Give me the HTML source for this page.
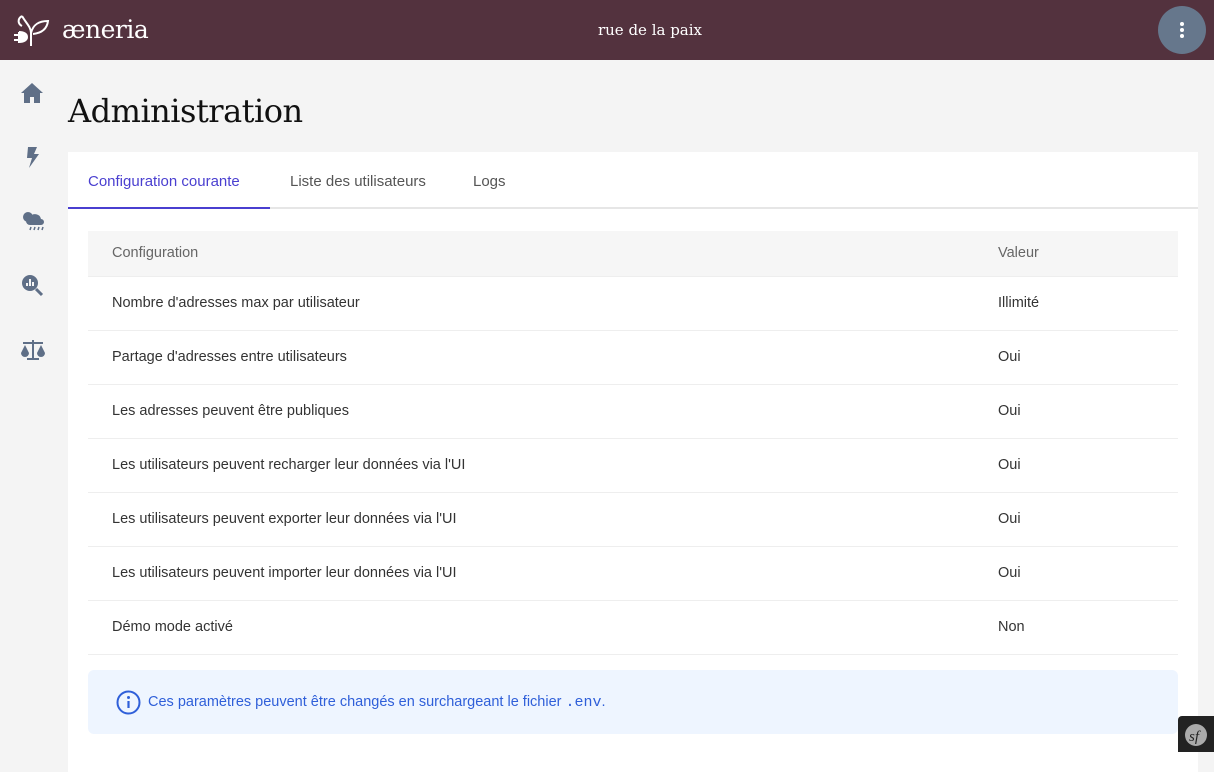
<!DOCTYPE html>
<html><head><meta charset="utf-8"><style>
*{box-sizing:border-box;margin:0;padding:0}
body{width:1214px;height:752px;overflow:hidden;background:#f4f4f4;font-family:"Liberation Sans",sans-serif;color:#333;position:relative}
.hdr{position:absolute;left:0;top:0;width:1214px;height:60px;background:#53323e;color:#fff}
.logo{position:absolute;left:62px;top:15px;font-family:"DejaVu Serif",serif;font-size:25px;letter-spacing:-0.5px}
.addr{position:absolute;left:0;width:1300px;top:21px;text-align:center;font-family:"DejaVu Serif",serif;font-size:15px}
.menu{position:absolute;left:1158px;top:6px;width:48px;height:48px;border-radius:50%;background:#66778c}
.menu i{position:absolute;left:22px;width:4px;height:4px;border-radius:50%;background:#fff}
.side svg{position:absolute;left:20px}
h1{position:absolute;left:68px;top:92px;font-family:"DejaVu Serif",serif;font-weight:normal;font-size:32px;color:#111;letter-spacing:-0.5px}
.card{position:absolute;left:68px;top:152px;width:1130px;height:620px;background:#fff}
.tabs{height:57px;border-bottom:2px solid #e6e6e6;position:relative;font-size:15px}
.tab{position:absolute;top:21px;color:#555}
.tab.a{color:#4a3fd0}
.ul{position:absolute;left:0;top:55px;width:202px;height:2px;background:#4a3fd0}
table{position:absolute;left:20px;top:79px;width:1090px;border-collapse:collapse;font-size:14.5px}
td{height:54px;padding-left:24px;border-bottom:1px solid #eee;color:#333}
tr.h td{height:45px;background:#f6f6f6;color:#666}
td.v{width:180px;padding-left:0}
.al{position:absolute;left:20px;top:518px;width:1090px;height:64px;background:#eef5ff;border-radius:6px;color:#2f5fd9;font-size:14.5px}
.al span{position:absolute;left:60px;top:24px}
.sf{position:absolute;left:1178px;top:716px;width:36px;height:36px;background:#222;border-radius:4px 0 0 0}
</style></head><body>
<div class="hdr">
<svg style="position:absolute;left:12px;top:13px" width="38" height="34" viewBox="0 0 38 34" fill="none" stroke="#fff" stroke-width="2"><path d="M19 33V20C19 14 14 10 10 3M19 20C21 12 26 8 36 8C35 16 30 20 21 21"/><path d="M10 3C5 6 6 11 10 13" /><path d="M2 22h5M2 27h5M7 19v10c5 0 8-2 8-5s-3-5-8-5" fill="#fff"/></svg>
<div class="logo">æneria</div>
<div class="addr">rue de la paix</div>
<div class="menu"><i style="top:16px"></i><i style="top:22px"></i><i style="top:28px"></i></div>
</div>
<div class="side">
<svg style="top:82px" width="24" height="22" viewBox="0 0 24 22" fill="#5f6f87"><path d="M12 1L1 11h3v10h6v-6h4v6h6V11h3z"/></svg>
<svg style="top:145px" width="24" height="24" viewBox="0 0 24 24" fill="#5f6f87"><path d="M8 2h9l-3 7h5L9 23l3-10H7z"/></svg>
<svg style="top:208px" width="26" height="24" viewBox="0 0 26 24" fill="#5f6f87"><circle cx="8" cy="9" r="5"/><path d="M10 17a4 4 0 010-8 6 6 0 0111 2 3 3 0 010 6z"/><path d="M11 19l-1 3M15 19l-1 3M19 19l-1 3M23 19l-1 3" stroke="#5f6f87" stroke-width="1.5"/></svg>
<svg style="top:273px" width="24" height="24" viewBox="0 0 24 24"><circle cx="10" cy="10" r="8" fill="#5f6f87"/><path d="M16 16l6 6" stroke="#5f6f87" stroke-width="3"/><path d="M7 13v-3M10 13V6M13 13V9" stroke="#f4f4f4" stroke-width="2"/></svg>
<svg style="top:338px" width="26" height="24" viewBox="0 0 26 24" fill="#5f6f87"><path d="M12 2h2v18h5v2H7v-2h5z M3 4h20v2H3z"/><path d="M1 15l4-8 4 8a4 4 0 01-8 0zM17 15l4-8 4 8a4 4 0 01-8 0z"/></svg>
</div>
<h1>Administration</h1>
<div class="card">
<div class="tabs"><span class="tab a" style="left:20px">Configuration courante</span><span class="tab" style="left:222px">Liste des utilisateurs</span><span class="tab" style="left:405px">Logs</span><div class="ul"></div></div>
<table>
<tr class="h"><td>Configuration</td><td class="v">Valeur</td></tr>
<tr><td>Nombre d'adresses max par utilisateur</td><td class="v">Illimité</td></tr>
<tr><td>Partage d'adresses entre utilisateurs</td><td class="v">Oui</td></tr>
<tr><td>Les adresses peuvent être publiques</td><td class="v">Oui</td></tr>
<tr><td>Les utilisateurs peuvent recharger leur données via l'UI</td><td class="v">Oui</td></tr>
<tr><td>Les utilisateurs peuvent exporter leur données via l'UI</td><td class="v">Oui</td></tr>
<tr><td>Les utilisateurs peuvent importer leur données via l'UI</td><td class="v">Oui</td></tr>
<tr><td>Démo mode activé</td><td class="v">Non</td></tr>
</table>
<div class="al"><svg style="position:absolute;left:28px;top:20px" width="25" height="25" viewBox="0 0 25 25"><circle cx="12.5" cy="12.5" r="11" fill="none" stroke="#2f5fd9" stroke-width="2"/><circle cx="12.5" cy="7.5" r="1.5" fill="#2f5fd9"/><path d="M12.5 11v7" stroke="#2f5fd9" stroke-width="2.2"/></svg><span>Ces paramètres peuvent être changés en surchargeant le fichier <code style="font-family:'Liberation Mono',monospace;font-size:15px">.env</code>.</span></div>
</div>
<div class="sf"><svg width="36" height="36" viewBox="0 0 36 36"><circle cx="18" cy="19" r="11" fill="#aaa"/><text x="11" y="25" font-family="Liberation Serif,serif" font-style="italic" font-size="15" fill="#222">sf</text></svg></div>
</body></html>
